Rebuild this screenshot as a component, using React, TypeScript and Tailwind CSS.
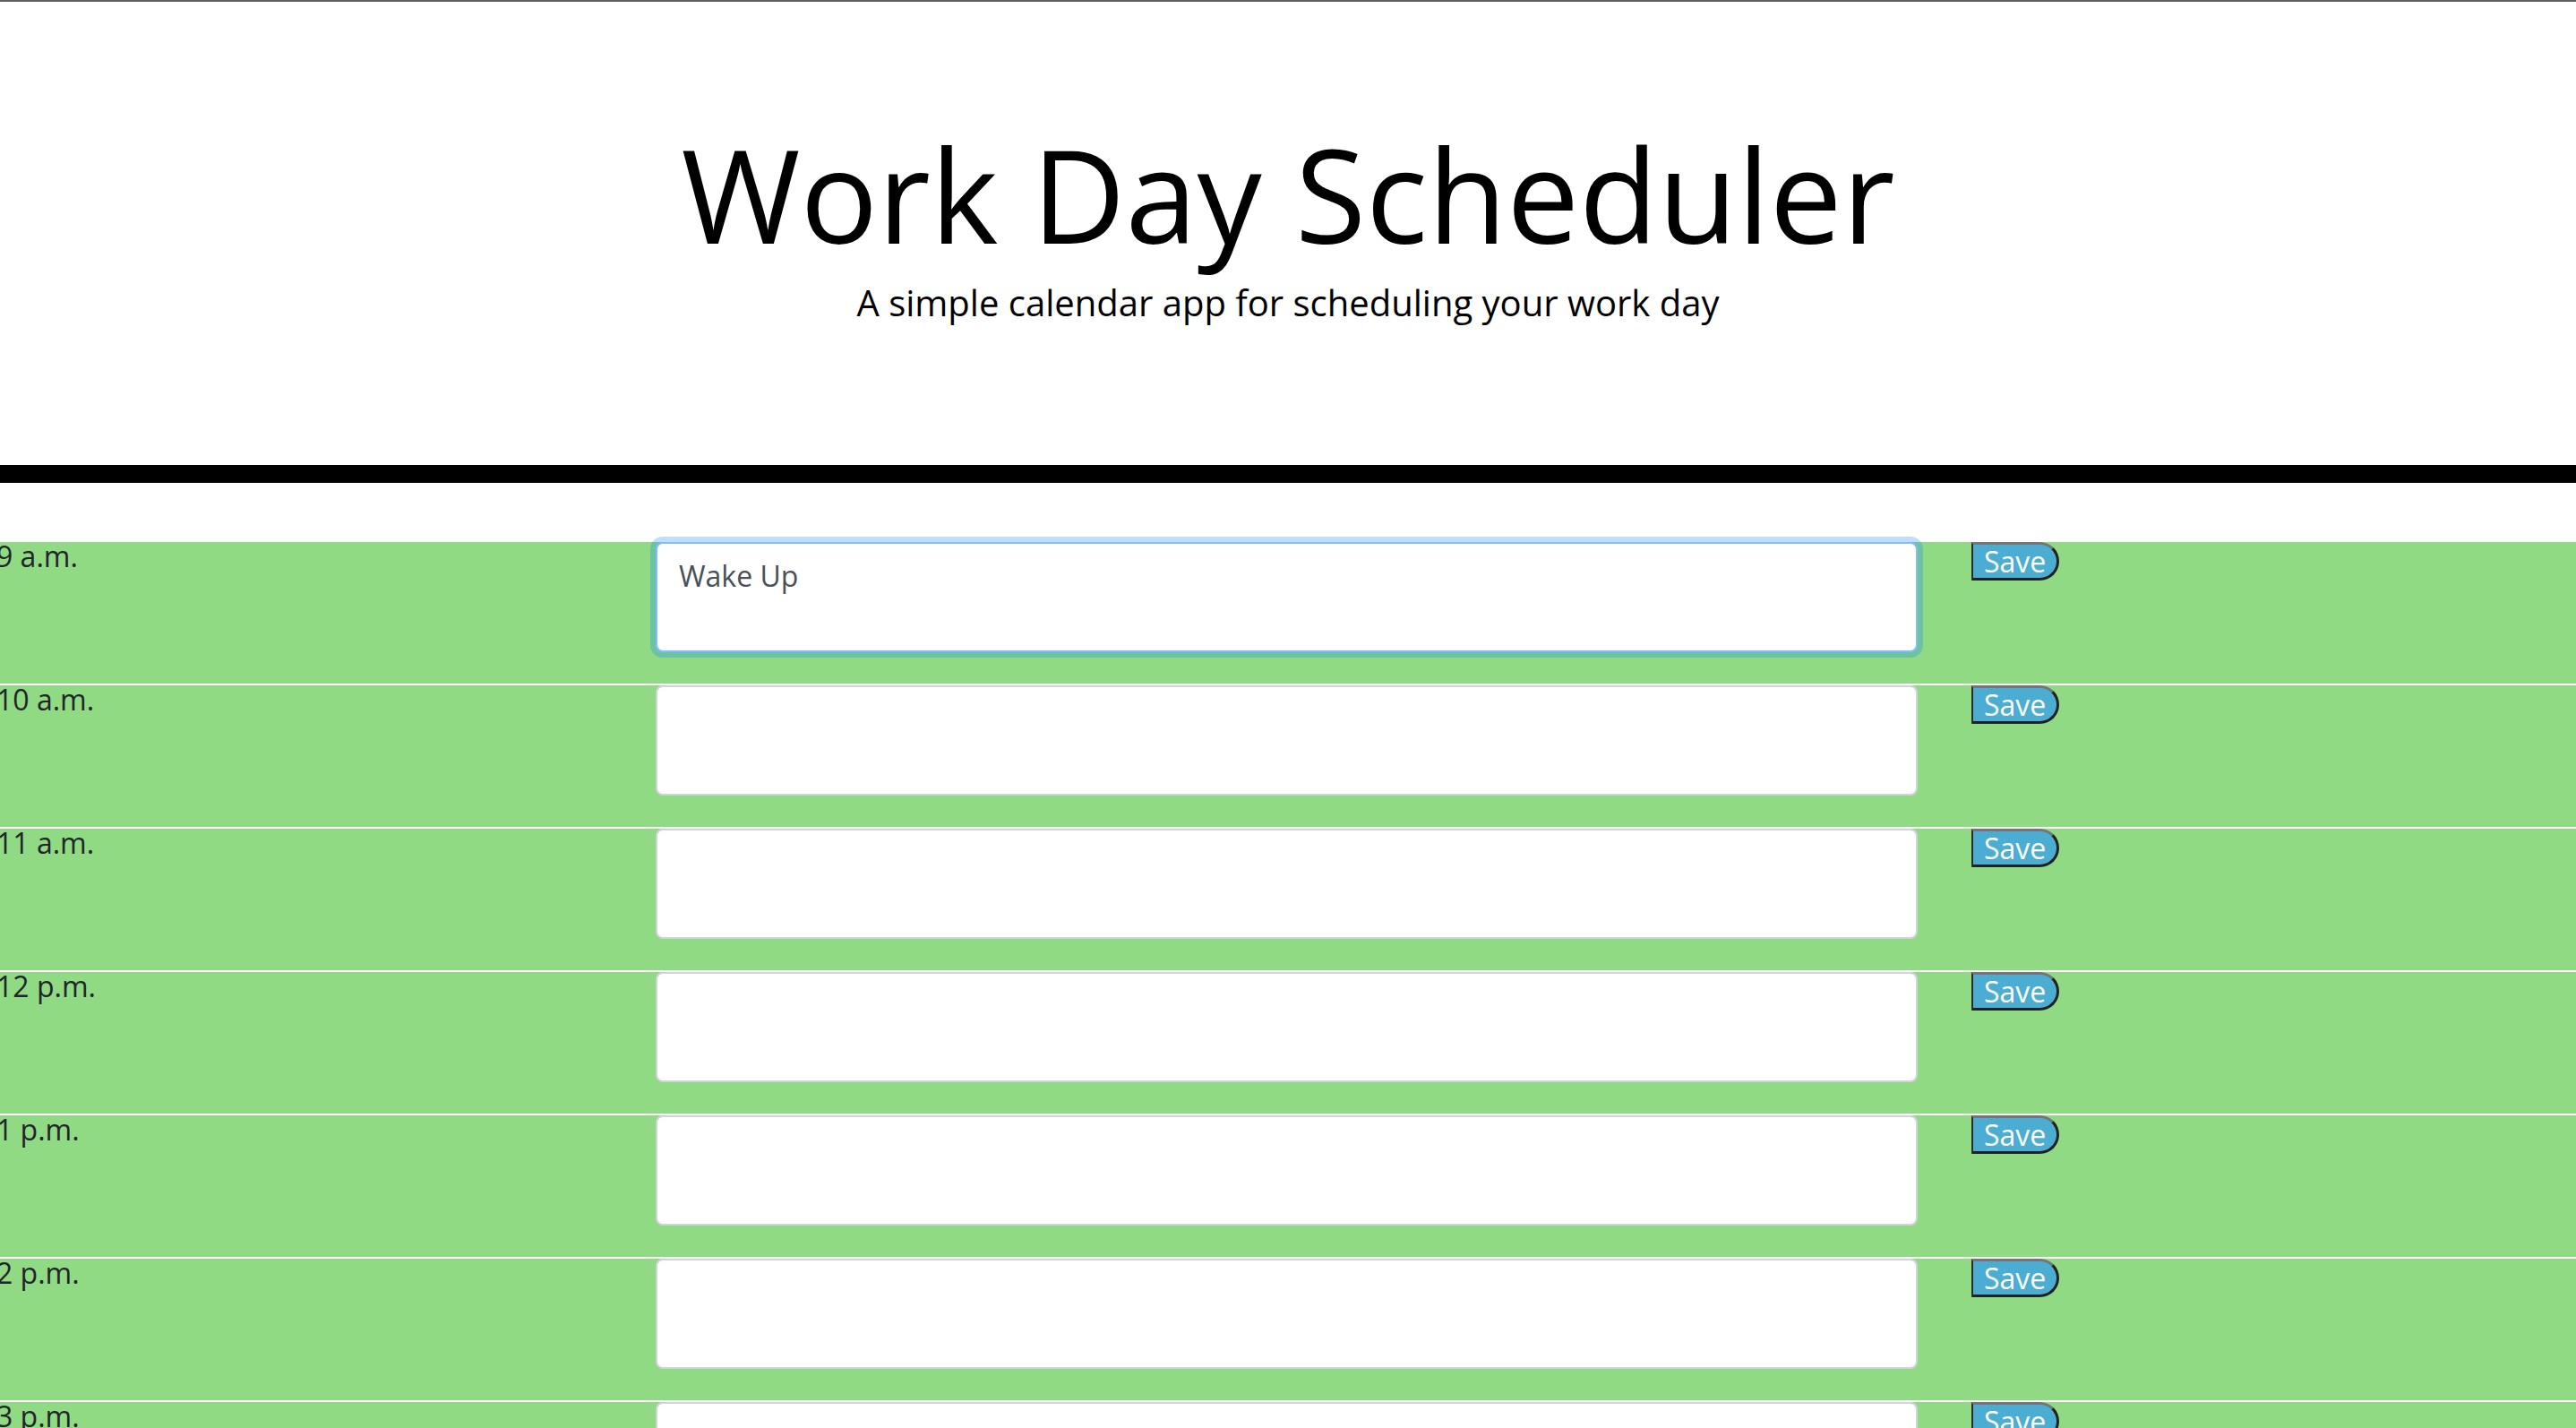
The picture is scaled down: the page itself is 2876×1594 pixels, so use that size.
const hours = ["9 a.m.", "10 a.m.", "11 a.m.", "12 p.m.", "1 p.m.", "2 p.m.", "3 p.m.", "4 p.m.", "5 p.m."];

function TimeBlock({ hour, value, focused }: { hour: string; value?: string; focused?: boolean }) {
  return (
    <div className="flex h-[160px] w-full border-t-2 border-white bg-[#90da84]">
      <div className="w-[732px] shrink-0 overflow-hidden">
        <span className="-ml-[4px] block text-[32px] leading-none text-[#212529]">{hour}</span>
      </div>
      <textarea
        defaultValue={value}
        readOnly
        className={`h-[123px] w-[1409px] shrink-0 resize-none overflow-hidden rounded-[8px] border-2 bg-white px-[24px] py-[12px] text-[32px] leading-[1.5] text-[#495057] outline-none ${
          focused ? "border-[#80bdff] shadow-[0_0_0_6px_rgba(0,123,255,0.25)]" : "border-[#ced4da]"
        }`}
      />
      <button className="ml-[60px] flex h-[43px] items-center rounded-r-[30px] border-t-[3px] border-r-[3px] border-b-[3px] border-l-2 border-t-[#767676] border-r-[#222] border-b-[#222] border-l-[#2b2b2b] bg-[#4cadd3] pl-[12px] pr-[12px] text-[32px] leading-none text-white">
        Save
      </button>
    </div>
  );
}

export default function App() {
  return (
    <div className="min-h-screen w-full border-t-2 border-[#5f5e63] bg-white font-['Open_Sans',sans-serif]">
      <header className="mb-[64px] flex flex-col items-center border-b-[20px] border-black pt-[142px] pb-[161px] text-black">
        <h1 className="text-[144px] font-normal leading-none">Work Day Scheduler</h1>
        <p className="mt-[30px] text-[40px] font-normal leading-none">A simple calendar app for scheduling your work day</p>
      </header>
      <div className="flex flex-col">
        {hours.map((h, i) => (
          <TimeBlock key={h} hour={h} value={i === 0 ? "Wake Up" : undefined} focused={i === 0} />
        ))}
      </div>
    </div>
  );
}
